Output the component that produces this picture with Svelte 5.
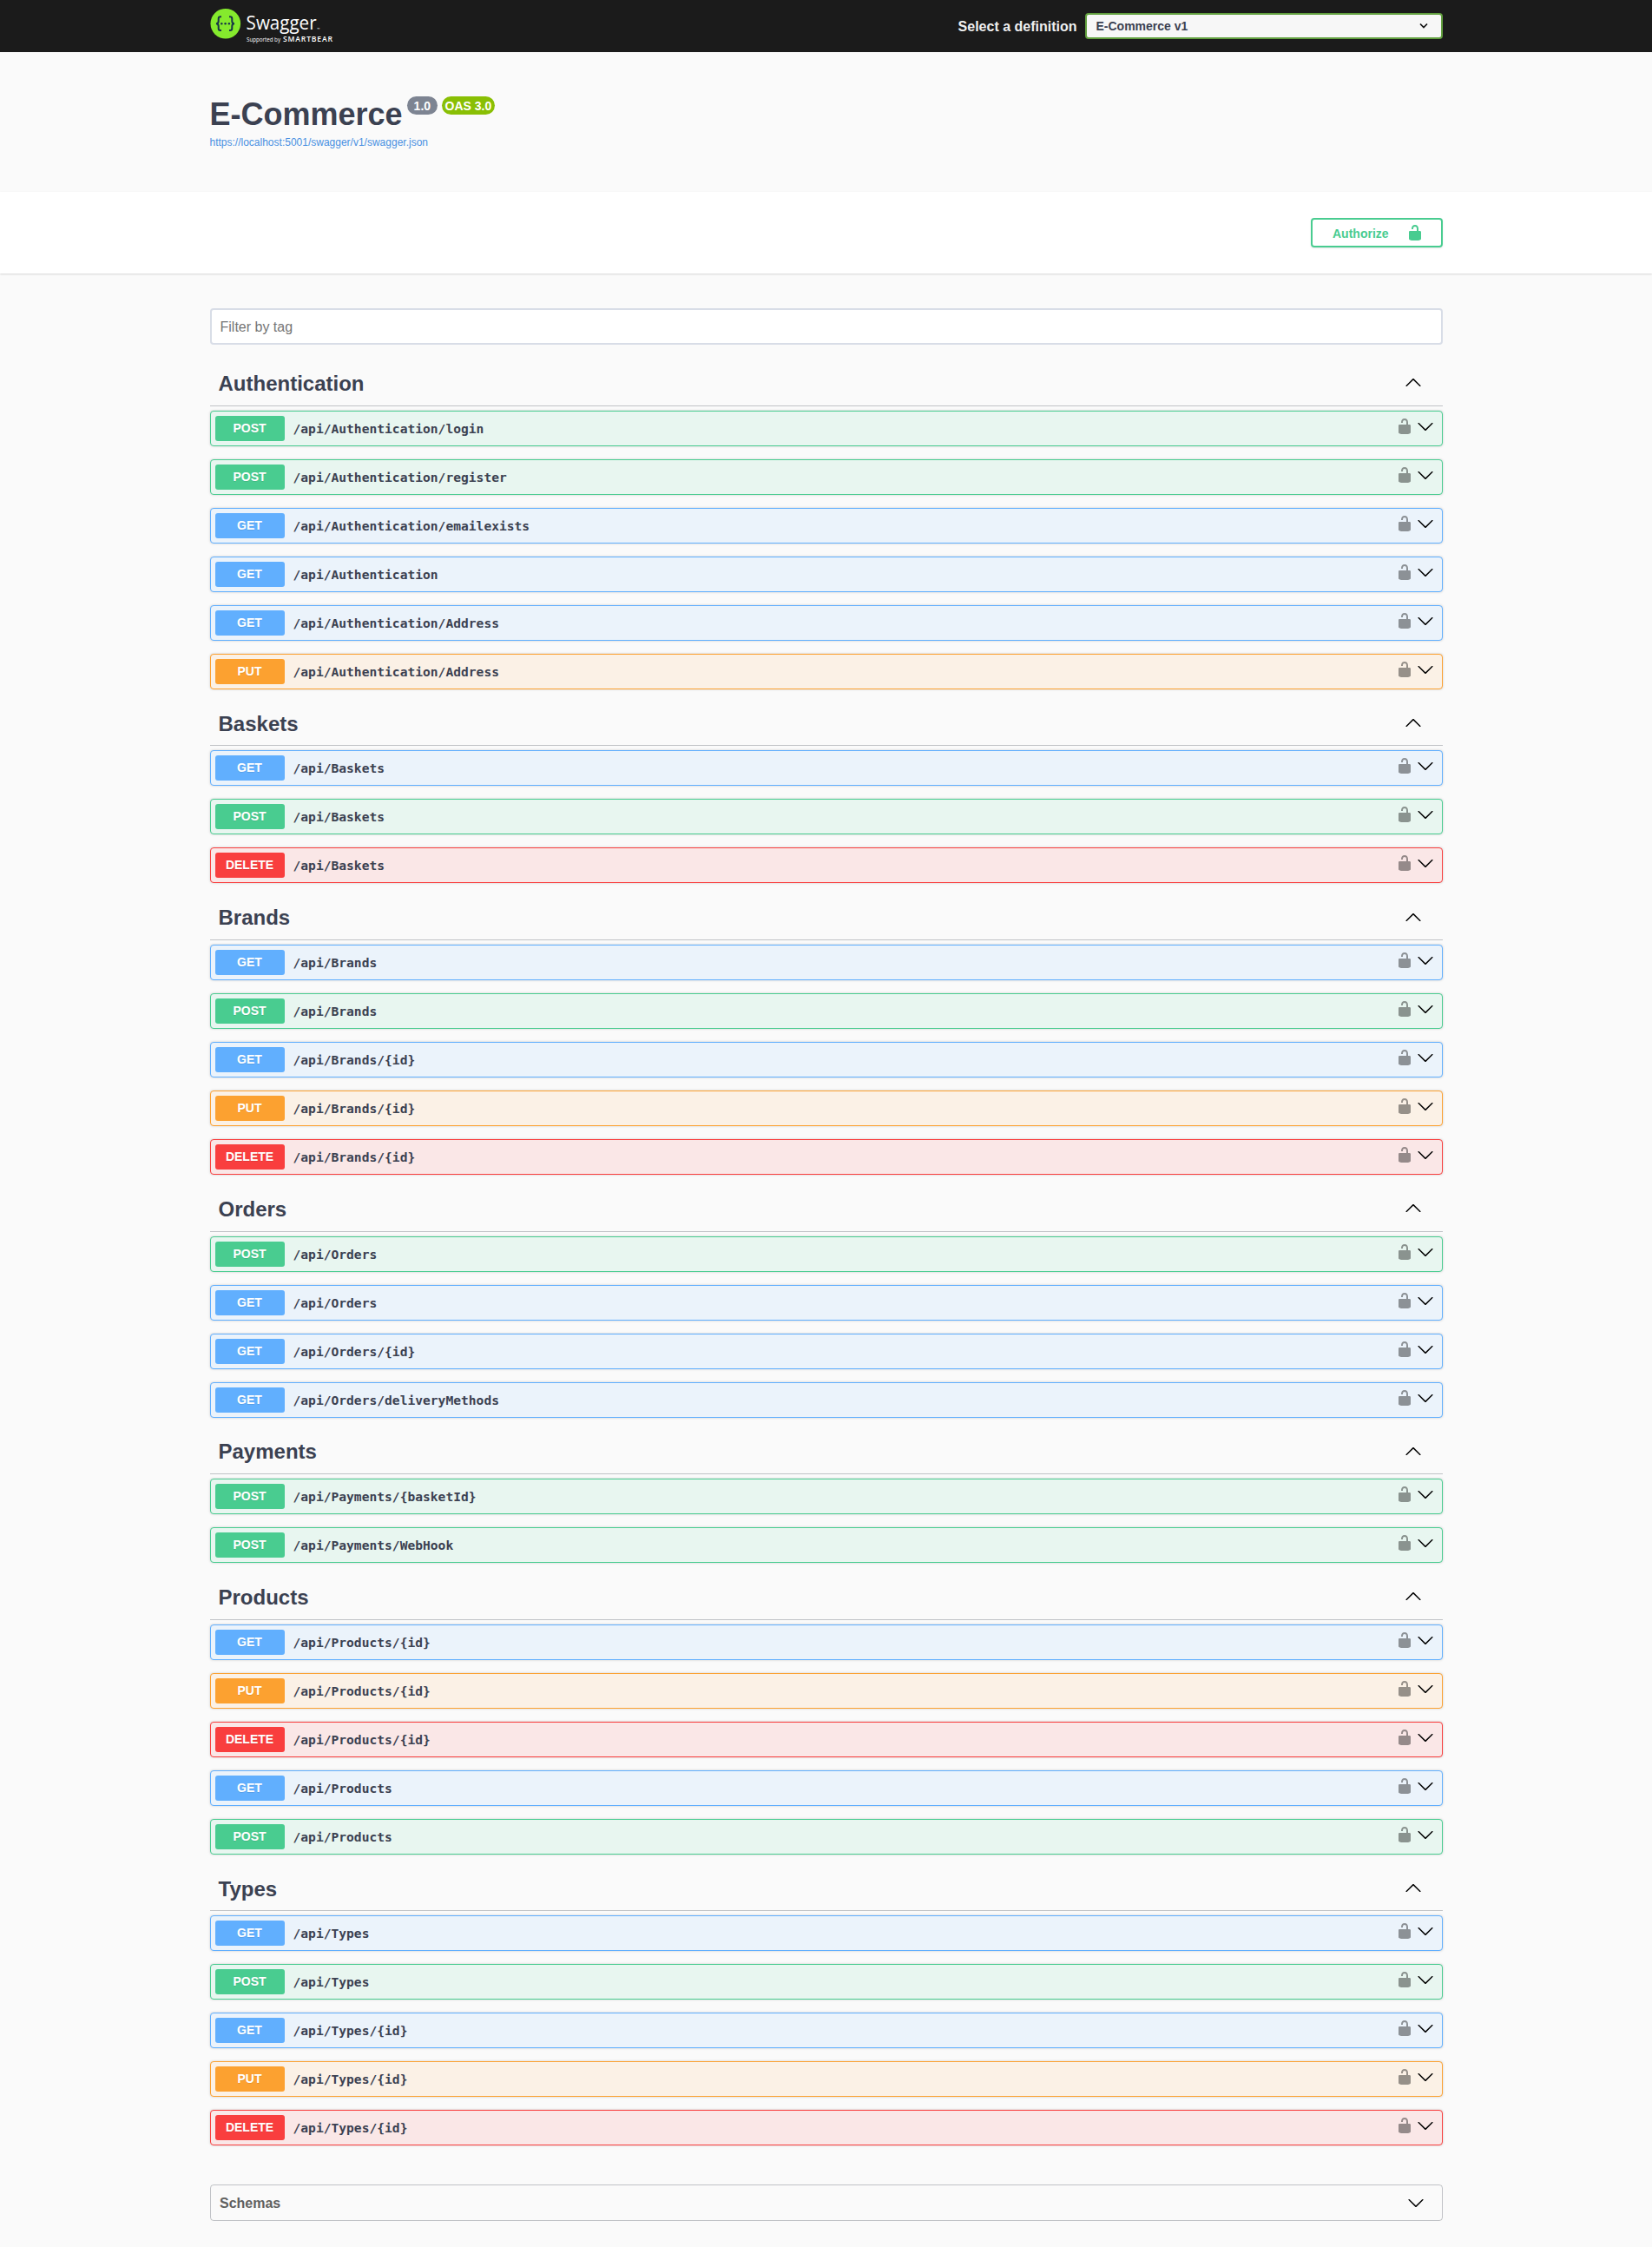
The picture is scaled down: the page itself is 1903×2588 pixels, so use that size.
<script>
  const groups = [
    ['Authentication', [
      ['POST', '/login'], ['POST', '/register'], ['GET', '/emailexists'],
      ['GET', ''], ['GET', '/Address'], ['PUT', '/Address'],
    ]],
    ['Baskets', [['GET', ''], ['POST', ''], ['DELETE', '']]],
    ['Brands', [['GET', ''], ['POST', ''], ['GET', '/{id}'], ['PUT', '/{id}'], ['DELETE', '/{id}']]],
    ['Orders', [['POST', ''], ['GET', ''], ['GET', '/{id}'], ['GET', '/deliveryMethods']]],
    ['Payments', [['POST', '/{basketId}'], ['POST', '/WebHook']]],
    ['Products', [['GET', '/{id}'], ['PUT', '/{id}'], ['DELETE', '/{id}'], ['GET', ''], ['POST', '']]],
    ['Types', [['GET', ''], ['POST', ''], ['GET', '/{id}'], ['PUT', '/{id}'], ['DELETE', '/{id}']]],
  ];
</script>

{#snippet lock()}
  <svg class="lock" width="20" height="20" viewBox="0 0 20 20" aria-hidden="true">
    <path d="M15.8 8H14V5.6C14 2.703 12.665 1 10 1 7.334 1 6 2.703 6 5.6V6h2v-.801C8 3.754 8.797 3 10 3c1.203 0 2 .754 2 2.199V8H4c-.553 0-1 .646-1 1.199V17c0 .549.428 1.139.951 1.307l1.197.387C5.672 18.861 6.55 19 7.1 19h5.8c.549 0 1.428-.139 1.951-.307l1.196-.387c.524-.167.953-.757.953-1.306V9.199C17 8.646 16.352 8 15.8 8z" />
  </svg>
{/snippet}

{#snippet arrowDown()}
  <svg width="20" height="20" viewBox="0 0 20 20" aria-hidden="true">
    <path d="M17.418 6.109c.272-.268.709-.268.979 0s.271.701 0 .969l-7.908 7.83c-.27.268-.707.268-.979 0l-7.908-7.83c-.27-.268-.27-.701 0-.969.271-.268.709-.268.979 0L10 13.25l7.418-7.141z" />
  </svg>
{/snippet}

{#snippet arrowUp()}
  <svg width="20" height="20" viewBox="0 0 20 20" aria-hidden="true">
    <path d="M17.418 14.908c.272.268.709.268.979 0s.271-.701 0-.969l-7.908-7.83c-.27-.268-.707-.268-.979 0l-7.908 7.83c-.27.268-.27.701 0 .969.271.268.709.268.979 0L10 7.767l7.418 7.141z" />
  </svg>
{/snippet}

<div class="page">
  <header class="topbar">
    <div class="wrapper bar">
      <svg class="logo" width="150" height="60" viewBox="0 0 150 60" role="img" aria-label="Swagger">
        <circle cx="17.8" cy="27.2" r="17.3" fill="#85ea2d" />
        <g fill="none" stroke="#173647" stroke-width="2">
          <path d="M13 19.3h-1.1q-2.2 0-2.2 2.3v2.6q0 2.9-2.7 3 2.7.1 2.7 3v2.6q0 2.3 2.2 2.3H13" />
          <path d="M22 19.3h1.1q2.2 0 2.2 2.3v2.6q0 2.9 2.7 3-2.7.1-2.7 3v2.6q0 2.3-2.2 2.3H22" />
        </g>
        <g fill="#173647">
          <circle cx="13.3" cy="27.3" r="1.2" /><circle cx="17.6" cy="27.3" r="1.2" /><circle cx="21.9" cy="27.3" r="1.2" />
        </g>
        <g fill="#fff">
          <text class="brand" x="41.6" y="34.3" textLength="81" lengthAdjust="spacingAndGlyphs">Swagger</text>
          <text class="tm" x="123.3" y="34.5">™</text>
          <text class="by" x="42" y="48.3" textLength="39" lengthAdjust="spacingAndGlyphs">Supported by</text>
          <text class="bear" x="84" y="48.3" textLength="57" lengthAdjust="spacing">SMARTBEAR</text>
        </g>
      </svg>
      <div class="definition">
        <span>Select a definition</span>
        <div class="select">
          E-Commerce v1
          <svg width="12" height="8" viewBox="0 0 12 8"><path d="M2 1.5 6 5.5l4-4" fill="none" stroke="#111" stroke-width="1.7" /></svg>
        </div>
      </div>
    </div>
  </header>

  <section class="wrapper info">
    <h1>E-Commerce <span class="badges"><small>1.0</small><small class="oas">OAS 3.0</small></span></h1>
    <a href="#spec">https://localhost:5001/swagger/v1/swagger.json</a>
  </section>

  <div class="scheme">
    <div class="wrapper auth">
      <button class="authorize">Authorize {@render lock()}</button>
    </div>
  </div>

  <main class="wrapper">
    <input class="filter" placeholder="Filter by tag" />
    {#each groups as [name, operations]}
      <section>
        <h3><span>{name}</span> {@render arrowUp()}</h3>
        {#each operations as [method, suffix]}
          <div class="operation {method.toLowerCase()}">
            <span class="method">{method}</span>
            <span class="path">/api/{name}{suffix}</span>
            {@render lock()}
            <span class="toggle">{@render arrowDown()}</span>
          </div>
        {/each}
      </section>
    {/each}
    <div class="schemas"><span>Schemas</span> {@render arrowDown()}</div>
  </main>
</div>

<style>
  :global(body) { margin: 0; background: #fafafa; }
  .page { min-height: 2588px; font-family: "Liberation Sans", Arial, sans-serif; color: #3b4151; }
  .page, .page * { box-sizing: border-box; }
  svg { display: block; flex: none; }
  .wrapper { width: 100%; max-width: 1460px; margin: 0 auto; padding: 0 20px; }

  .topbar { height: 60px; background: #1b1b1b; }
  .bar { display: flex; justify-content: space-between; }
  .brand { font: 22.5px "Open Sans", sans-serif; }
  .tm { font: 4px "Open Sans", sans-serif; }
  .by { font: 6.5px "Open Sans", sans-serif; }
  .bear { font: 600 8.6px "Open Sans", sans-serif; }
  .definition { display: flex; align-items: center; gap: 9px; color: #f0f0f0; font-size: 16px; font-weight: bold; }
  .definition span { padding-top: 1px; }
  .select {
    display: flex; align-items: center; justify-content: space-between;
    width: 412px; height: 30px; padding: 0 14px 0 11px;
    border: 2px solid #62a03f; border-radius: 4px;
    background: #f7f7f7; color: #3b4151; font-size: 14px;
  }

  .info { height: 161px; padding-top: 51px; }
  h1 { display: flex; margin: 0; font-size: 36px; line-height: 42px; }
  .badges { display: flex; gap: 5px; margin-left: 5px; }
  small {
    height: 21px; padding: 0 8px; border-radius: 57px;
    background: #7d8492; color: #fff; font-size: 14px; line-height: 22px;
  }
  .oas { padding: 0 3.5px; background: #89bf04; }
  a { display: block; margin-top: 4px; color: #4990e2; font-size: 12px; line-height: 14px; text-decoration: none; }

  .scheme { padding: 30px 0; background: #fff; box-shadow: 0 1px 2px rgba(0, 0, 0, .15); }
  .auth { display: flex; justify-content: flex-end; }
  .authorize {
    display: flex; align-items: center; justify-content: space-between;
    width: 152px; height: 34px; padding: 1px 20px 0 23.5px;
    border: 2px solid #49cc90; border-radius: 4px; background: transparent;
    box-shadow: 0 1px 2px rgba(0, 0, 0, .1);
    color: #49cc90; font: bold 14px "Liberation Sans", Arial, sans-serif;
  }
  .authorize .lock { margin-top: -1px; fill: #49cc90; }

  .filter {
    display: block; width: 100%; height: 42px; margin: 40px 0 20.2px; padding: 1px 10px 0;
    border: 2px solid #d8dde7; border-radius: 4px; background: #fff;
    font: 16px "Liberation Sans", Arial, sans-serif;
  }
  .filter::placeholder { color: #757575; }

  h3 {
    display: flex; align-items: center; justify-content: space-between;
    height: 50.6px; margin: 0 0 5px; padding: 0 24px 3px 10px;
    border-bottom: 1px solid rgba(59, 65, 81, .3); font-size: 24px;
  }
  h3 span { padding-top: 3px; }
  .operation {
    display: flex; align-items: center; height: 41px; margin-bottom: 15px; padding: 0 9px 0 5px;
    border: 1px solid; border-radius: 4px; box-shadow: 0 0 3px rgba(0, 0, 0, .19);
  }
  .operation .lock { margin-top: -5px; fill: #000; opacity: .4; }
  .toggle { margin: -5px 0 0 4px; }
  .method {
    width: 80px; height: 29px; border-radius: 3px; color: #fff;
    font-size: 14px; font-weight: bold; line-height: 29px; text-align: center;
    text-shadow: 0 1px 0 rgba(0, 0, 0, .1);
  }
  .path { flex: 1; padding: 0 10px; font: bold 14.61px "DejaVu Sans Mono", monospace; }
  .post { border-color: #49cc90; background: #e8f6f0; }
  .post .method { background: #49cc90; }
  .get { border-color: #61affe; background: #ebf3fb; }
  .get .method { background: #61affe; }
  .put { border-color: #fca130; background: #fbf1e6; }
  .put .method { background: #fca130; }
  .delete { border-color: #f93e3e; background: #fae7e7; }
  .delete .method { background: #f93e3e; }

  .schemas {
    display: flex; align-items: center; justify-content: space-between;
    height: 42px; margin-top: 44.5px; padding: 0 20px 0 10.5px;
    border: 1px solid rgba(59, 65, 81, .3); border-radius: 4px;
    color: #606060; font-size: 16px; font-weight: bold;
  }
  .schemas span { padding-top: 2px; }
</style>
